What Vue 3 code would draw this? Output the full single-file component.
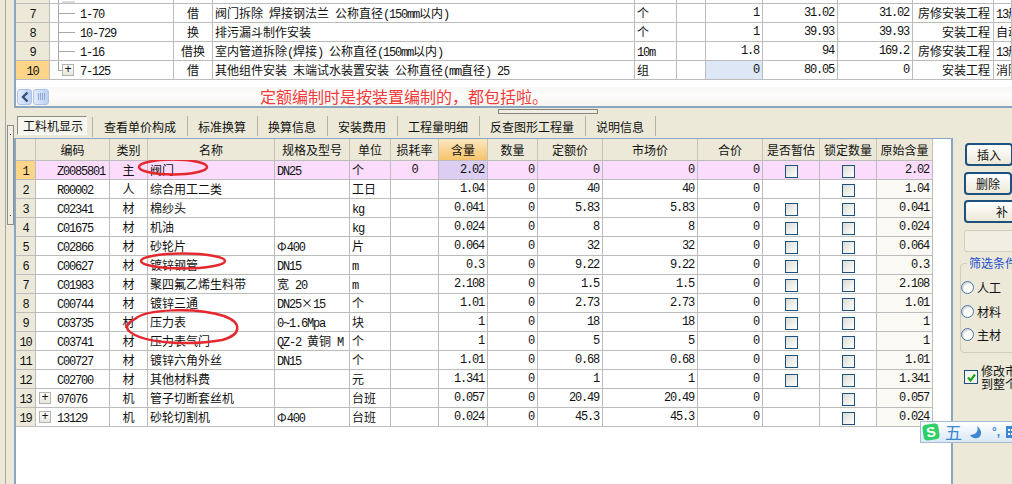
<template>
  <div class="page">
    <div class="rail">
      <div class="rail-box"><i></i><i></i></div>
    </div>

    <div class="main">
      <div class="top-panel">
        <table class="grid">
          <colgroup>
            <col v-for="(w, i) in topCols" :key="i" :style="{ width: w + 'px' }" />
          </colgroup>
          <tbody>
            <tr class="stub">
              <td class="num-cell"></td>
              <td class="tree tree-mid"><div class="stub-box"></div></td>
              <td v-for="n in 9" :key="n"></td>
            </tr>
            <tr v-for="(row, r) in topRows" :key="r">
              <td class="num-cell" :class="{ current: row.current }"><span class="mono">{{ row.no }}</span></td>
              <td class="tree" :class="row.current ? 'tree-end' : 'tree-mid'">
                <span v-if="row.current" class="plus tree-plus">+</span>
                <span class="mono">{{ row.code }}</span>
              </td>
              <td class="center">{{ row.kind }}</td>
              <td class="left"><span v-for="(p, k) in runs(row.name)" :key="k" :class="{ mono: p.mono }">{{ p.text }}</span></td>
              <td class="left"><span v-for="(p, k) in runs(row.unit)" :key="k" :class="{ mono: p.mono }">{{ p.text }}</span></td>
              <td></td>
              <td class="right mono" :class="{ selected: row.current }">{{ row.qty }}</td>
              <td class="right mono">{{ row.price }}</td>
              <td class="right mono">{{ row.total }}</td>
              <td class="right">{{ row.trade }}</td>
              <td class="left"><span v-for="(p, k) in runs(row.note)" :key="k" :class="{ mono: p.mono }">{{ p.text }}</span></td>
            </tr>
          </tbody>
        </table>
        <div class="hbar">
          <div class="bar-btn">
            <svg width="10" height="12" viewBox="0 0 10 12"><path d="M7.5 1.5 3 6l4.500 4.500" fill="none" stroke="#35507f" stroke-width="2.400" /></svg>
          </div>
          <div class="bar-thumb"><b></b><b></b><b></b><b></b></div>
          <span class="note">定额编制时是按装置编制的，都包括啦。</span>
        </div>
      </div>

      <div class="splitter"><div class="handle"></div></div>

      <div class="tabs">
        <div v-for="(t, i) in tabs" :key="t" class="tab" :class="{ active: i === 0 }">{{ t }}</div>
      </div>

      <div class="lower">
        <div class="lower-grid">
          <table class="grid detail">
            <colgroup>
              <col v-for="(w, i) in cols" :key="i" :style="{ width: w + 'px' }" />
            </colgroup>
            <thead>
              <tr>
                <th v-for="(h, i) in headers" :key="i" :class="{ sorted: h === '含量' }">{{ h }}</th>
              </tr>
            </thead>
            <tbody>
              <tr v-for="(row, r) in rows" :key="r" :class="{ picked: r === 0 }">
                <td class="num-cell" :class="{ current: r === 0 }"><span class="mono">{{ row.no }}</span></td>
                <td class="code">
                  <span v-if="row.expand" class="plus code-plus">+</span>
                  <span class="mono">{{ row.code }}</span>
                </td>
                <td class="center">{{ row.kind }}</td>
                <td class="left">{{ row.name }}</td>
                <td class="left"><span v-for="(p, k) in runs(row.spec)" :key="k" :class="{ mono: p.mono }">{{ p.text }}</span></td>
                <td class="left"><span v-for="(p, k) in runs(row.unit)" :key="k" :class="{ mono: p.mono }">{{ p.text }}</span></td>
                <td class="center mono">{{ row.loss }}</td>
                <td class="right mono" :class="{ 'qty-hit': r === 0 }">{{ row.qty }}</td>
                <td class="right mono">0</td>
                <td class="right mono">{{ row.price }}</td>
                <td class="right mono">{{ row.price }}</td>
                <td class="right mono">0</td>
                <td class="center"><span v-if="row.est" class="box"></span></td>
                <td class="center"><span class="box"></span></td>
                <td class="right mono orig">{{ row.qty }}</td>
              </tr>
            </tbody>
          </table>

          <svg class="marks" width="260" height="200" viewBox="0 0 260 200">
            <ellipse cx="173" cy="7" rx="34" ry="7.500" />
            <ellipse cx="183" cy="101" rx="42" ry="7.500" />
            <path d="M135 159C146 149 196 147 224 156 243 163 241 175 222 180 196 185 142 185 128 170 125 165 129 162 135 159Z" />
          </svg>
        </div>

        <aside class="side">
          <button class="btn btn-insert">插入</button>
          <button class="btn btn-del">删除</button>
          <button class="btn btn-add">补</button>
          <div class="field"></div>
          <fieldset class="filter">
            <legend>筛选条件</legend>
            <label v-for="f in filters" :key="f" class="radio"><i></i>{{ f }}</label>
          </fieldset>
          <div class="sync">
            <span class="tick">
              <svg width="11" height="11" viewBox="0 0 11 11"><path d="M2 5.500 4.500 8.500 9 2.500" fill="none" stroke="#21a121" stroke-width="2.200" /></svg>
            </span>
            <span class="sync-text">修改市场价<br />到整个项目</span>
          </div>
        </aside>
      </div>
    </div>

    <div class="ime">
      <span class="ime-logo">S</span>
      <span class="ime-wu">五</span>
      <svg width="14" height="15" viewBox="0 0 14 15"><path d="M9 1c2 5-1 9-7 9 2 4 10 5 11-1 .5-3-1-6-4-8Z" fill="#3d86d0" /></svg>
      <span class="ime-dot">°,</span>
      <svg width="12" height="12" viewBox="0 0 12 12">
        <rect width="12" height="12" fill="#3d86d0" />
        <path d="M2 3h2v2H2zM5 3h2v2H5zM8 3h2v2H8zM2 7h2v2H2zM5 7h2v2H5zM8 7h2v2H8z" fill="#fff" />
      </svg>
    </div>
  </div>
</template>

<script setup>
const topCols = [34, 124, 39, 422, 42, 29, 57, 75, 75, 81, 18]
const cols = [20, 74, 38, 127, 75, 41, 48, 49, 50, 65, 95, 65, 57, 57, 56]

const headers = ['', '编码', '类别', '名称', '规格及型号', '单位', '损耗率', '含量', '数量', '定额价', '市场价', '合价', '是否暂估', '锁定数量', '原始含量']

const tabs = ['工料机显示', '查看单价构成', '标准换算', '换算信息', '安装费用', '工程量明细', '反查图形工程量', '说明信息']

const filters = ['人工', '材料', '主材']

const topRows = [
  { no: '7', code: '1-70', kind: '借', name: '阀门拆除 焊接钢法兰 公称直径(150mm以内)', unit: '个', qty: '1', price: '31.02', total: '31.02', trade: '房修安装工程', note: '13册' },
  { no: '8', code: '10-729', kind: '换', name: '排污漏斗制作安装', unit: '个', qty: '1', price: '39.93', total: '39.93', trade: '安装工程', note: '自动' },
  { no: '9', code: '1-16', kind: '借换', name: '室内管道拆除(焊接) 公称直径(150mm以内)', unit: '10m', qty: '1.8', price: '94', total: '169.2', trade: '房修安装工程', note: '13册' },
  { no: '10', code: '7-125', kind: '借', name: '其他组件安装 末端试水装置安装 公称直径(mm直径) 25', unit: '组', qty: '0', price: '80.05', total: '0', trade: '安装工程', note: '消防', current: true }
]

const rows = [
  { no: '1', code: 'Z0085801', kind: '主', name: '阀门', spec: 'DN25', unit: '个', loss: '0', qty: '2.02', price: '0', est: true },
  { no: '2', code: 'R00002', kind: '人', name: '综合用工二类', spec: '', unit: '工日', qty: '1.04', price: '40' },
  { no: '3', code: 'C02341', kind: '材', name: '棉纱头', spec: '', unit: 'kg', qty: '0.041', price: '5.83', est: true },
  { no: '4', code: 'C01675', kind: '材', name: '机油', spec: '', unit: 'kg', qty: '0.024', price: '8', est: true },
  { no: '5', code: 'C02866', kind: '材', name: '砂轮片', spec: 'Φ400', unit: '片', qty: '0.064', price: '32', est: true },
  { no: '6', code: 'C00627', kind: '材', name: '镀锌钢管', spec: 'DN15', unit: 'm', qty: '0.3', price: '9.22', est: true },
  { no: '7', code: 'C01983', kind: '材', name: '聚四氟乙烯生料带', spec: '宽 20', unit: 'm', qty: '2.108', price: '1.5', est: true },
  { no: '8', code: 'C00744', kind: '材', name: '镀锌三通', spec: 'DN25×15', unit: '个', qty: '1.01', price: '2.73', est: true },
  { no: '9', code: 'C03735', kind: '材', name: '压力表', spec: '0~1.6Mpa', unit: '块', qty: '1', price: '18', est: true },
  { no: '10', code: 'C03741', kind: '材', name: '压力表气门', spec: 'QZ-2 黄铜 M', unit: '个', qty: '1', price: '5', est: true },
  { no: '11', code: 'C00727', kind: '材', name: '镀锌六角外丝', spec: 'DN15', unit: '个', qty: '1.01', price: '0.68', est: true },
  { no: '12', code: 'C02700', kind: '材', name: '其他材料费', spec: '', unit: '元', qty: '1.341', price: '1', est: true },
  { no: '13', code: '07076', kind: '机', name: '管子切断套丝机', spec: '', unit: '台班', qty: '0.057', price: '20.49', expand: true },
  { no: '19', code: '13129', kind: '机', name: '砂轮切割机', spec: 'Φ400', unit: '台班', qty: '0.024', price: '45.3', expand: true }
]

// the old grid font has half width latin, so latin and cjk parts get their own size
function runs(text) {
  return (text.match(/[\x00-\x7f]+|[^\x00-\x7f]+/g) || []).map((part) => ({
    text: part,
    mono: part.charCodeAt(0) < 128
  }))
}
</script>

<style scoped>
.page {
  position: relative;
  display: flex;
  width: 1012px;
  height: 484px;
  overflow: hidden;
  background: #ece9d8;
  color: #111;
  font-family: "Noto Sans CJK SC", "Liberation Sans", sans-serif;
  font-size: 12px;
}

.rail {
  flex: 0 0 9px;
  margin-left: 5px;
  border-left: 1px solid #a9a9a0;
  box-sizing: border-box;
}

.rail-box {
  display: flex;
  flex-direction: column;
  justify-content: space-between;
  align-items: center;
  width: 7px;
  height: 100px;
  margin: 125px 0 0 1px;
  padding: 8px 0;
  box-sizing: border-box;
  border: 1px solid #8d8d86;
  background: #f0eee2;
}

.rail-box i {
  width: 1px;
  height: 1px;
  background: #1b2f8a;
}

.main {
  flex: 1;
  min-width: 0;
  display: flex;
  flex-direction: column;
}

.top-panel {
  height: 108px;
  box-sizing: border-box;
  display: flex;
  flex-direction: column;
  justify-content: space-between;
  background: #fff;
  border-left: 2px solid #8ba6c1;
  border-bottom: 2px solid #8ba6c1;
  overflow: hidden;
}

.grid {
  table-layout: fixed;
  border-collapse: separate;
  border-spacing: 0;
  width: 0;
}

.grid td,
.grid th {
  height: 19px;
  padding: 0;
  box-sizing: border-box;
  border-right: 1px solid #bcbcbc;
  border-bottom: 1px solid #bcbcbc;
  line-height: 18px;
  font-weight: 400;
  white-space: pre;
  overflow: hidden;
}

.grid .stub td {
  height: 4px;
  line-height: 0;
  font-size: 0;
}

.stub-box {
  width: 13px;
  height: 2px;
  margin-left: 12px;
  background: #dcdcd4;
}

.grid .mono {
  font-family: "Liberation Mono", monospace;
  font-size: 12px;
  letter-spacing: -1.2px;
  line-height: 1;
}

.left {
  padding-left: 2px !important;
}

.right {
  padding-right: 3px !important;
  text-align: right;
}

.center {
  text-align: center;
}

.num-cell {
  background: #ece9d8;
  text-align: center;
}

.num-cell.current {
  background: #fdd488;
}

.selected {
  background: #dde7f5;
}

.tree {
  position: relative;
  padding-left: 30px !important;
}

.tree::before {
  content: "";
  position: absolute;
  left: 8px;
  top: 0;
  bottom: 0;
  border-left: 1px solid #a8a8a8;
}

.tree::after {
  content: "";
  position: absolute;
  left: 8px;
  top: 9px;
  width: 17px;
  border-top: 1px solid #a8a8a8;
}

.tree-end::before {
  bottom: 9px;
}

.tree-end::after {
  width: 4px;
}

.stub .tree {
  padding-left: 0 !important;
}

.stub .tree::after {
  display: none;
}

.plus {
  display: inline-flex;
  align-items: center;
  justify-content: center;
  width: 12px;
  height: 12px;
  box-sizing: border-box;
  border: 1px solid #b4b4ac;
  background: linear-gradient(#fff, #e6e6dc);
  font-family: "Liberation Mono", monospace;
  font-size: 12px;
  line-height: 10px;
}

.tree-plus {
  position: absolute;
  z-index: 1;
  left: 12px;
  top: 3px;
}

.hbar {
  display: flex;
  align-items: center;
  height: 19px;
  padding-left: 1px;
  background: linear-gradient(#f7f7f5, #fdfdfd 40%, #f6f5ee);
}

.bar-btn,
.bar-thumb {
  display: flex;
  align-items: center;
  justify-content: center;
  box-sizing: border-box;
  height: 16px;
  border: 1px solid #a9c2e8;
  border-radius: 3px;
  background: linear-gradient(90deg, #e2ebfb, #bcd0f1);
}

.bar-btn {
  width: 15px;
}

.bar-thumb {
  width: 16px;
  margin-left: 1px;
  gap: 1px;
}

.bar-thumb b {
  width: 1px;
  height: 7px;
  background: #8fa9d6;
}

.note {
  margin-left: 211px;
  color: #f23a3a;
  font-size: 16px;
  line-height: 19px;
}

.splitter {
  height: 8px;
}

.handle {
  width: 100px;
  height: 5px;
  margin: 1px 0 0 484px;
  box-sizing: border-box;
  border: 1px solid #85857e;
  background: #f0eee2;
}

.tabs {
  display: flex;
  height: 20px;
  margin: 0 0 2px 3px;
}

.tab {
  display: flex;
  align-items: center;
  padding: 0 11px 0 10px;
  border-right: 1px solid #b5b3a3;
  white-space: nowrap;
}

.tab.active {
  position: relative;
  box-sizing: border-box;
  width: 70px;
  height: 19px;
  margin-right: 7px;
  padding: 0 5px;
  border: 1px solid #8d8c80;
  border-right-color: #fff;
  border-bottom-color: #fff;
  background: #f6f5ee;
}

.tab.active::after {
  content: "";
  position: absolute;
  right: -7px;
  top: 0;
  height: 20px;
  border-right: 1px solid #b5b3a3;
}

.lower {
  flex: 1;
  min-height: 0;
  display: flex;
}

.lower-grid {
  position: relative;
  flex: 0 0 939px;
  box-sizing: border-box;
  background: #fff;
  border: 2px solid #8ba6c1;
  border-width: 1px 2px 0;
}

.detail thead th {
  height: 22px;
  line-height: 20px;
  background: #ece9d8;
  border-right-color: #c4c3b5;
  border-bottom-color: #bcbcbc;
}

.detail thead th.sorted {
  background: linear-gradient(#fbe7bf, #f6c46b);
}

.picked td {
  background: #fbdcfd;
}

.picked td.num-cell {
  background: #fdd488;
}

.picked td.qty-hit {
  background: #dccdf3;
}

.orig {
  background: #fbf9f3;
}

.code {
  position: relative;
  padding-left: 21px !important;
}

.code-plus {
  position: absolute;
  left: 3px;
  top: 3px;
}

.box {
  display: inline-block;
  width: 13px;
  height: 13px;
  box-sizing: border-box;
  vertical-align: -3px;
  border: 1px solid #1c5180;
  background: linear-gradient(135deg, #dcdcd4, #fff);
}

.marks {
  position: absolute;
  left: -16px;
  top: 21px;
  width: 260px;
  height: 200px;
  pointer-events: none;
}

.marks ellipse,
.marks path {
  fill: none;
  stroke: #e5282e;
  stroke-width: 2.500;
}

.side {
  flex: 1;
  min-width: 0;
  overflow: hidden;
  padding-top: 5px;
}

.btn {
  display: block;
  height: 23px;
  padding: 0;
  box-sizing: border-box;
  border: 2px solid #1c5180;
  border-radius: 4px;
  background: linear-gradient(#fff, #ece9d8);
  color: #111;
  font: inherit;
}

.btn-insert {
  width: 48px;
  margin-left: 12px;
}

.btn-del {
  width: 48px;
  margin: 6px 0 0 11px;
}

.btn-add {
  width: 76px;
  margin: 5px 0 0 11px;
}

.field {
  width: 80px;
  height: 22px;
  margin: 7px 0 0 11px;
  box-sizing: border-box;
  border: 1px solid #d0cec0;
  border-radius: 3px;
  background: #f1efe4;
}

.filter {
  width: 90px;
  height: 96px;
  margin: 5px 0 0 7px;
  padding: 7px 0 0 0;
  box-sizing: border-box;
  border: 1px solid #d0cec0;
  border-radius: 4px;
}

.filter legend {
  margin-left: 6px;
  padding: 0 2px;
  color: #1a50d0;
  line-height: 12px;
}

.radio {
  display: flex;
  align-items: center;
  gap: 3px;
  height: 23.500px;
  white-space: nowrap;
}

.radio i {
  width: 13px;
  height: 13px;
  box-sizing: border-box;
  border: 1px solid #4a76a5;
  border-radius: 50%;
  background: #fff;
  box-shadow: inset 1px 1px 2px #c5c5bc;
}

.sync {
  display: flex;
  align-items: center;
  gap: 3px;
  margin: 11px 0 0 11px;
  width: 90px;
}

.tick {
  flex: none;
  display: flex;
  align-items: center;
  justify-content: center;
  width: 14px;
  height: 14px;
  box-sizing: border-box;
  border: 1px solid #1c5180;
  background: #f4f4ee;
}

.sync-text {
  line-height: 13px;
  white-space: nowrap;
}

.ime {
  position: absolute;
  left: 920px;
  top: 421px;
  display: flex;
  align-items: center;
  gap: 6px;
  width: 100px;
  height: 22px;
  padding-left: 2px;
  box-sizing: border-box;
  border: 1px solid #a5bbd2;
  background: linear-gradient(#fff, #d9e8f7);
}

.ime-logo {
  width: 16px;
  height: 16px;
  border-radius: 4px;
  background: #2fcf68;
  color: #fff;
  font: 700 14px/16px "Liberation Sans", sans-serif;
  text-align: center;
  transform: rotate(-8deg);
}

.ime-wu {
  color: #3d86d0;
  font-size: 17px;
  line-height: 20px;
}

.ime-dot {
  margin-left: 4px;
  color: #3d86d0;
  font: 700 12px/16px "Liberation Sans", sans-serif;
}
</style>
